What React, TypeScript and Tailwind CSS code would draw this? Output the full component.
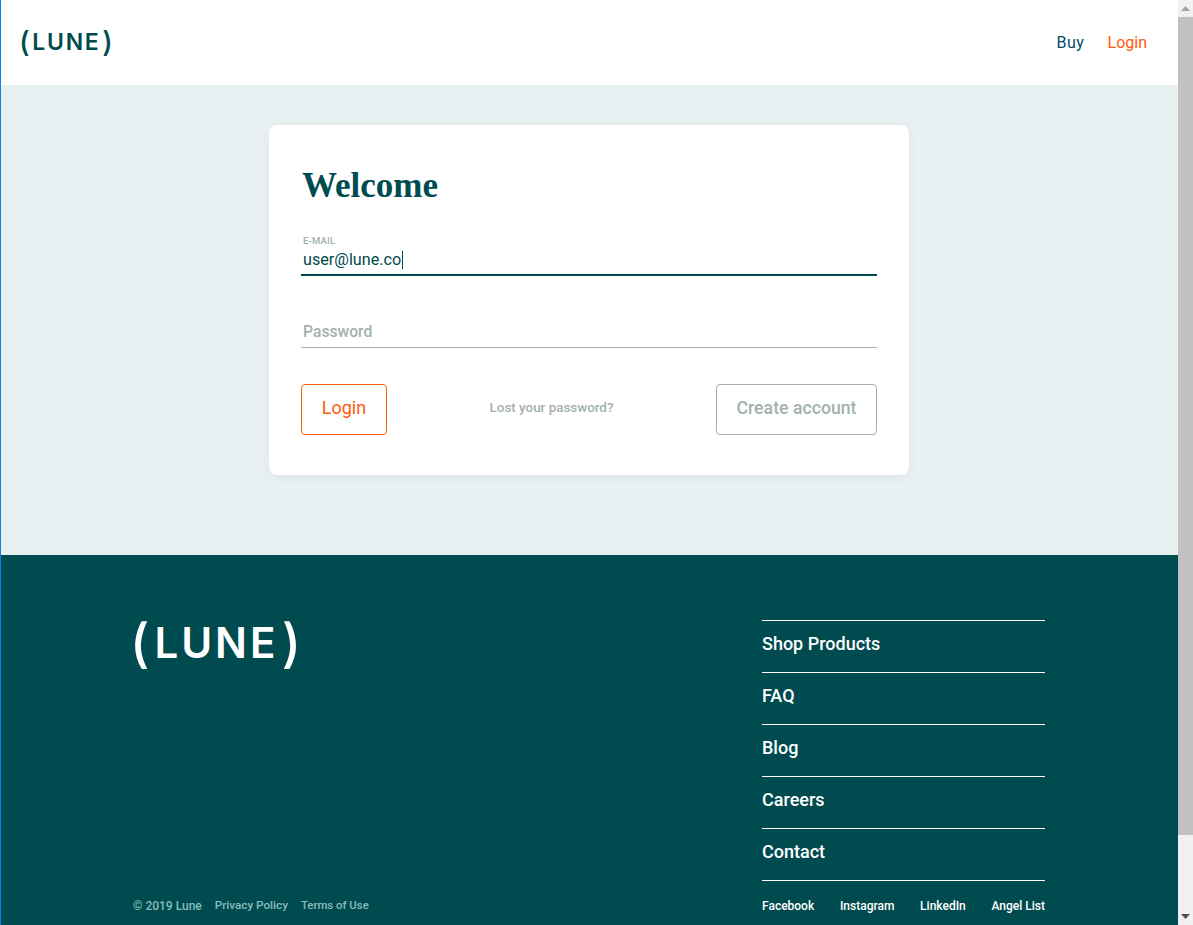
const sans = "font-['Roboto','Liberation_Sans',sans-serif]";

function Logo({ className }: { className: string }) {
  return (
    <div className={`flex items-center font-['Inter','Roboto',sans-serif] font-semibold leading-none ${className}`}>
      <span className="text-[1.25em] font-medium tracking-normal">(</span>
      <span className="ml-[0.12em] mr-[0.08em]">LUNE</span>
      <span className="text-[1.25em] font-medium tracking-normal">)</span>
    </div>
  );
}

const links = ["Shop Products", "FAQ", "Blog", "Careers", "Contact"];
const social = ["Facebook", "Instagram", "LinkedIn", "Angel List"];

export default function App() {
  return (
    <div className={`flex h-[925px] w-[1193px] overflow-hidden bg-white ${sans}`}>
      <div className="flex w-[1178px] flex-col border-l border-[#0a84e8]">
        <header className="flex h-[85px] shrink-0 items-center justify-between bg-white pl-[18px] pr-[31px]">
          <Logo className="text-[23px] font-bold tracking-[1.7px] text-[#004b4f]" />
          <nav className="flex gap-[23px] text-[16px]">
            <a className="tracking-[0.6px] text-[#004b6b]">Buy</a>
            <a className="text-[#ff5a0a]">Login</a>
          </nav>
        </header>

        <main className="flex h-[470px] shrink-0 justify-center bg-[#e9f0f1] pt-[40px] pr-[1px]">
          <div className="flex h-[350px] w-[640px] flex-col rounded-lg bg-white pl-[32px] pr-[32px] pt-[39px] shadow-[0_2px_12px_rgba(0,75,79,0.06)]">
            <h1 className="ml-[1px] font-['Liberation_Serif',serif] text-[35px] font-bold leading-[44px] text-[#004b4f]">Welcome</h1>

            <div className="mt-[27px] flex h-[41px] flex-col gap-[4px] border-b-2 border-[#004b4f] px-[2px]">
              <label className="text-[9.5px] font-medium uppercase leading-[11px] tracking-[0.2px] text-[#a3b1ae]">E-mail</label>
              <div className="flex h-[20px] items-center text-[16.2px] leading-[20px] text-[#004b4f]">
                <span>user@lune.co</span>
                <span className="ml-[0.5px] h-[18px] w-px bg-[#004b4f]" />
              </div>
            </div>

            <div className="mt-[31px] flex h-[41px] items-end border-b border-[#a3b1ae] px-[2px] pb-[3px] text-[15.7px] font-medium text-[#a3b1ae]">
              Password
            </div>

            <div className="mt-[36px] flex items-center justify-between">
              <button className="flex h-[51px] w-[86px] items-center justify-center rounded-[4px] border border-[#ff5a0a] pb-[4px] text-[18px] text-[#ff5a0a]">
                Login
              </button>
              <a className="mb-[3px] text-[13.4px] font-medium text-[#a3b1ae]">Lost your password?</a>
              <button className="flex h-[51px] w-[161px] items-center justify-center rounded-[4px] border border-[#a3b1ae] pb-[2px] text-[17.7px] font-medium text-[#a3b1ae]">
                Create account
              </button>
            </div>
          </div>
        </main>

        <footer className="flex flex-1 justify-between bg-[#004b4f] pl-[132px] pr-[133px] pt-[65px]">
          <div className="flex flex-col justify-between">
            <Logo className="-ml-[3px] -mt-[3px] text-[42px] font-bold tracking-[3px] text-white" />
            <div className="mb-[15px] flex gap-[13px] text-[12px] font-medium text-[#86bdbd]">
              <span>© 2019 Lune</span>
              <a className="text-[11.7px]">Privacy Policy</a>
              <a className="text-[11.4px]">Terms of Use</a>
            </div>
          </div>
          <div className="flex w-[283px] flex-col">
            {links.map((l) => (
              <a key={l} className="flex h-[52px] items-center border-t border-white pb-[7px] text-[18px] font-medium text-white">
                {l}
              </a>
            ))}
            <div className="flex h-[50px] items-center justify-between border-t border-white text-[12px] font-medium text-white">
              {social.map((s) => (
                <a key={s}>{s}</a>
              ))}
            </div>
          </div>
        </footer>
      </div>

      <div className="flex w-[15px] flex-col bg-[#f1f1f1]">
        <div className="flex h-[17px] items-center justify-center">
          <svg width="9" height="5" viewBox="0 0 9 5"><path d="M4.5 0 9 5H0z" fill="#a3a3a3" /></svg>
        </div>
        <div className="h-[818px] bg-[#c1c1c1]" />
        <div className="flex flex-1 items-end justify-center pb-[6px]">
          <svg width="9" height="5" viewBox="0 0 9 5"><path d="M0 0h9L4.500 5z" fill="#505050" /></svg>
        </div>
      </div>
    </div>
  );
}
